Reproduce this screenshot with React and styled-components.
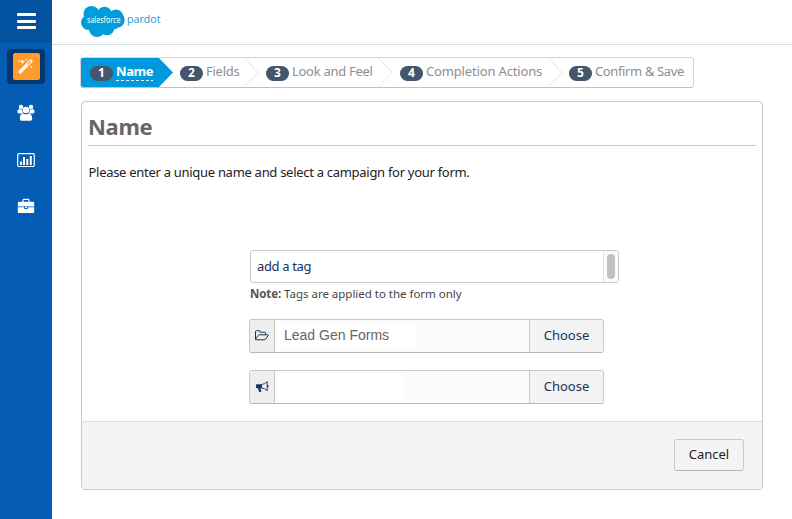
import React from "react";
import styled, { createGlobalStyle, css } from "styled-components";

const GlobalStyle = createGlobalStyle`
  * { box-sizing: border-box; }
  body { margin: 0; background: #fff; font-family: "Noto Sans", sans-serif; font-size: 13px; color: #222; overflow: hidden; }
  button, input { font: inherit; }
  svg { display: block; }
`;

const Page = styled.div`
  display: grid;
  grid-template-columns: 52px 1fr;
  height: 519px;
`;

const Sidebar = styled.nav`
  background: #045cb4;
  display: flex;
  flex-direction: column;
  align-items: center;
`;

const MenuToggle = styled.button`
  width: 52px;
  height: 43px;
  border: 0;
  padding: 13px 0 0 17px;
  background: #0353a0;
  display: flex;
  flex-direction: column;
  justify-content: flex-start;
  gap: 3.5px;
`;

const MenuBar = styled.span`
  width: 19px;
  height: 3px;
  border-radius: 1px;
  background: #fff;
`;

const ActiveNav = styled.div`
  width: 38px;
  height: 35px;
  margin-top: 6px;
  border-radius: 4px;
  background: #03366b;
  display: flex;
  align-items: center;
  justify-content: center;
`;

const NavTile = styled.div`
  width: 27px;
  height: 27px;
  border-radius: 2px;
  background: #ff9a2c;
  display: flex;
  align-items: center;
  justify-content: center;
`;

const NavItem = styled.div`
  height: 18px;
  margin-top: ${(p) => p.$gap}px;
`;

const Main = styled.div`
  min-width: 0;
`;

const Header = styled.header`
  height: 45px;
  border-bottom: 1px solid #d8dde6;
  padding: 5px 0 0 28px;
`;

const Content = styled.main`
  padding: 12px 29px 0 28px;
`;

const Steps = styled.ol`
  display: flex;
  list-style: none;
  margin: 0;
  padding: 0;
  width: 614px;
  height: 31px;
  border: 1px solid #d4d4d4;
  border-bottom-color: #c2c2c2;
  border-radius: 3px;
  overflow: hidden;
`;

const Step = styled.li`
  display: flex;
  width: ${(p) => p.$width}px;
  height: 29px;
  padding-left: ${(p) => p.$indent}px;
  color: #8e8e8e;
  white-space: nowrap;
  position: relative;
  ${(p) =>
    p.$active &&
    css`
      color: #fff;
      font-weight: 700;
      background: #0099dd;
      clip-path: polygon(0 0, calc(100% - 14px) 0, 100% 50%, calc(100% - 14px) 100%, 0 100%);
    `}
`;

const StepNumber = styled.span`
  width: 23px;
  height: 15px;
  margin-top: 8px;
  border-radius: 8px;
  background: #44566c;
  color: #fff;
  font-size: 12px;
  font-weight: 700;
  line-height: 14px;
  text-align: center;
`;

const StepLabel = styled.span`
  height: 23px;
  margin-left: 3px;
  line-height: 26px;
  letter-spacing: ${(p) => p.$tracking}px;
  ${(p) => p.$active && css`
    background: repeating-linear-gradient(90deg, #fff 0 3px, transparent 3px 5px) bottom / 100% 1px no-repeat;
  `}
`;

const StepArrow = styled.svg`
  position: absolute;
  right: 0;
  top: 0;
`;

const Panel = styled.section`
  margin-top: 13px;
  margin-left: 1px;
  width: 682px;
  height: 389px;
  border: 1px solid #c9c9c9;
  border-radius: 4px;
  display: flex;
  flex-direction: column;
  overflow: hidden;
`;

const PanelBody = styled.div`
  flex: 1;
  padding: 0 6px;
`;

const Title = styled.h1`
  margin: 0;
  height: 44px;
  border-bottom: 1px solid #c9c9c9;
  color: #666;
  font-size: 22px;
  font-weight: 700;
  line-height: 48px;
  letter-spacing: -0.3px;
`;

const Intro = styled.p`
  margin: 16px 0 0;
  padding-left: 0.5px;
  line-height: 20px;
  letter-spacing: -0.29px;
`;

const Fields = styled.div`
  padding-left: 161px;
  margin-top: 68px;
`;

const TagBox = styled.div`
  display: flex;
  width: 369px;
  height: 33px;
  border: 1px solid #c9c9c9;
  border-radius: 3px;
  margin-left: 1px;
  padding-left: 6px;
  line-height: 31px;
  letter-spacing: -0.35px;
  color: #16325c;
  overflow: hidden;
`;

const ScrollTrack = styled.div`
  margin-left: auto;
  width: 15px;
  border-left: 1px solid #e5e5e5;
  background: #fafafa;
  padding: 3px 0 0 3px;
`;

const ScrollThumb = styled.div`
  width: 8px;
  height: 25px;
  border-radius: 4px;
  background: #c1c1c1;
`;

const Note = styled.p`
  margin: 3px 0 0 1px;
  height: 16px;
  line-height: 16px;
  font-size: 11.5px;
  letter-spacing: -0.02px;
  color: #444;
`;

const NoteLead = styled.b`
  color: #555;
  letter-spacing: -0.1px;
`;

const Picker = styled.div`
  display: flex;
  width: 355px;
  height: 34px;
  margin-top: 17px;
  border: 1px solid #c9c9c9;
  border-bottom-color: #b8b8b8;
  border-radius: 3px;
  overflow: hidden;
`;

const PickerIcon = styled.div`
  width: 24px;
  background: #eee;
  color: #16325c;
  padding: 8px 0 0 4px;
`;

const PickerValue = styled.div`
  width: 256px;
  border: solid #c9c9c9;
  border-width: 0 1px;
  padding-left: 9px;
  background: linear-gradient(#fff, #fff) 2px 3px / ${(p) => p.$fill}px 25px no-repeat #fbfbfb;
  color: #666;
  font-family: "Liberation Sans", Arial, sans-serif;
  font-size: 14px;
  line-height: 31px;
`;

const PickerButton = styled.button`
  flex: 1;
  border: 0;
  padding: 0 0 2px;
  background: #f4f4f4;
  color: #16325c;
  line-height: 30px;
`;

const PanelFooter = styled.footer`
  height: 68px;
  border-top: 1px solid #dedede;
  background: #f4f4f4;
  display: flex;
  justify-content: flex-end;
  padding: 17px 18px 0;
`;

const CancelButton = styled.button`
  width: 70px;
  height: 32px;
  border: 1px solid #c9c9c9;
  border-bottom-color: #b5b5b5;
  border-radius: 3px;
  background: #f4f4f4;
  color: #222;
  padding: 0 0 2px;
  line-height: 28px;
`;

const LogoWord = styled.text`
  font-family: ${(p) => (p.$brand ? '"Open Sans"' : '"Noto Sans"')}, sans-serif;
  font-size: ${(p) => (p.$brand ? 11.5 : 8.5)}px;
  fill: ${(p) => (p.$brand ? "#159bd7" : "#fff")};
`;

const Logo = () => (
  <svg width="84" height="34" viewBox="80 5 84 34">
    <g fill="#009ddc">
      <circle cx="91.5" cy="14" r="8" />
      <circle cx="104.5" cy="14" r="7.3" />
      <circle cx="116" cy="16.5" r="7" />
      <circle cx="117" cy="20" r="7.7" />
      <circle cx="88.5" cy="22.5" r="7.5" />
      <circle cx="97" cy="29" r="8" />
      <circle cx="107" cy="27.5" r="7.7" />
      <rect x="88" y="13" width="29" height="16" />
    </g>
    <LogoWord x="87" y="23" textLength="33.5" lengthAdjust="spacingAndGlyphs">salesforce</LogoWord>
    <LogoWord $brand x="127" y="23" textLength="33.5" lengthAdjust="spacingAndGlyphs">pardot</LogoWord>
  </svg>
);

const WandIcon = () => (
  <svg width="18" height="18" viewBox="0 0 18 18">
    <path d="M3.2 13.8 13.9 3.3" stroke="#fff" strokeWidth="3.4" strokeLinecap="round" />
    <path d="M10.6 6.6 13.9 3.3" stroke="#ff9a2c" strokeWidth="1.3" />
    <path d="M5.5 1.3l.7 1.8 1.8.7-1.8.7-.7 1.8-.7-1.8L3 3.8l1.8-.7zM9.5.5l.4 1 1 .4-1 .4-.4 1-.4-1-1-.4 1-.4zM2.3 1.5l.4.9.9.4-.9.4-.4.9-.4-.9-.9-.4.9-.4zM14.5 7.6l.4 1 1 .4-1 .4-.4 1-.4-1-1-.4 1-.4z" fill="#fff" />
  </svg>
);

const PeopleIcon = () => (
  <svg width="18" height="18" viewBox="0 0 18 18" fill="#fff">
    <circle cx="4" cy="2.9" r="2.2" />
    <circle cx="14" cy="2.9" r="2.2" />
    <path d="M.4 8c0-2 .9-3.1 2-3.1 1 .8 2.2.8 3 .4-.4 2 .1 3.3 1 4.1H2C.9 9.4.4 8.9.4 8zM17.6 8c0-2-.9-3.1-2-3.1-1 .8-2.2.8-3 .4.4 2-.1 3.3-1 4.1H16c1.1 0 1.6-.5 1.6-1.4z" />
    <circle cx="9" cy="6" r="3.3" />
    <path d="M2.8 14.4c0-3 1.2-5 3.5-5 1.6 1.2 3.8 1.2 5.4 0 2.3 0 3.5 2 3.5 5 0 1.6-.8 2.4-2.2 2.4H5c-1.4 0-2.2-.8-2.2-2.4z" />
  </svg>
);

const ChartIcon = () => (
  <svg width="18" height="18" viewBox="0 0 18 18">
    <rect x=".7" y="2.7" width="16.6" height="12.8" rx="1.2" fill="none" stroke="#fff" strokeWidth="1.2" />
    <path d="M3 10.5h2V14H3zM6 6h2v8H6zM9.3 8h2v6h-2zM12.8 5h2v9h-2z" fill="#fff" />
  </svg>
);

const BriefcaseIcon = () => (
  <svg width="18" height="18" viewBox="0 0 18 18" fill="#fff">
    <path d="M6 5.5V3.2q0-.8.8-.8h4.4q.8 0 .8.8v2.3" fill="none" stroke="#fff" strokeWidth="1.1" />
    <path d="M2 4.8h14q1.2 0 1.2 1.2v3.6H11v-.4H7v.4H.8V6Q.8 4.8 2 4.8zM.8 10.3H7v.8q0 .8.8.8h2.4q.8 0 .8-.8v-.8h6.2v4.6q0 1.2-1.2 1.2H2q-1.2 0-1.2-1.2zM8 9.7h2v1.2H8z" />
  </svg>
);

const FolderIcon = () => (
  <svg width="16" height="16" viewBox="0 0 16 16" fill="none" stroke="currentColor" strokeWidth="1" strokeLinejoin="round">
    <path d="M1.5 11.3V3.6q0-.9.9-.9h2.7q.9 0 .9.9v.6h4.6q.9 0 .9.9v1.7M1.5 11.3l2.6-3.8q.5-.7 1.3-.7h8.3q1 0 .4.8l-2.3 3.3q-.7.9-1.6.9H2.4q-.9 0-.9-.5z" />
  </svg>
);

const MegaphoneIcon = () => (
  <svg width="16" height="16" viewBox="0 0 16 16">
    <path d="M3 5.2h5v4H6.4l.5 1.3-.2.6.9 1.2q-1.1 1-2.5.4-.7-1.8-1-3.5H3Q2 9.2 2 8.2v-2q0-1 1-1z" fill="currentColor" />
    <path d="M7.5 5.5Q11 5.2 13.2 2.7v9Q11 9.4 7.5 8.9" fill="none" stroke="currentColor" strokeWidth=".9" />
    <path d="M13.8 6.2v2" stroke="currentColor" strokeWidth="1.4" />
  </svg>
);

const steps = [
  { label: "Name", width: 92, indent: 9, tracking: -0.4, active: true },
  { label: "Fields", width: 86, indent: 7, tracking: -0.25 },
  { label: "Look and Feel", width: 134, indent: 7, tracking: -0.28 },
  { label: "Completion Actions", width: 170, indent: 7, tracking: -0.16 },
  { label: "Confirm & Save", width: 130, indent: 6, tracking: -0.37 },
];

export default function App() {
  return (
    <>
      <GlobalStyle />
      <Page>
        <Sidebar>
          <MenuToggle aria-label="Menu"><MenuBar /><MenuBar /><MenuBar /></MenuToggle>
          <ActiveNav><NavTile><WandIcon /></NavTile></ActiveNav>
          <NavItem $gap={20}><PeopleIcon /></NavItem>
          <NavItem $gap={29}><ChartIcon /></NavItem>
          <NavItem $gap={28}><BriefcaseIcon /></NavItem>
        </Sidebar>
        <Main>
          <Header><Logo /></Header>
          <Content>
            <Steps>
              {steps.map((s, i) => (
                <Step key={s.label} $width={s.width} $indent={s.indent} $active={s.active}>
                  <StepNumber>{i + 1}</StepNumber>
                  <StepLabel $active={s.active} $tracking={s.tracking}>{s.label}</StepLabel>
                  {i > 0 && i < steps.length - 1 && (
                    <StepArrow width="15" height="29" fill="none" stroke="#e3e3e3">
                      <path d="M.5 0 14 14.5.5 29" />
                    </StepArrow>
                  )}
                </Step>
              ))}
            </Steps>
            <Panel>
              <PanelBody>
                <Title>Name</Title>
                <Intro>Please enter a unique name and select a campaign for your form.</Intro>
                <Fields>
                  <TagBox>
                    add a tag
                    <ScrollTrack><ScrollThumb /></ScrollTrack>
                  </TagBox>
                  <Note><NoteLead>Note:</NoteLead> Tags are applied to the form only</Note>
                  <Picker>
                    <PickerIcon><FolderIcon /></PickerIcon>
                    <PickerValue $fill={140}>Lead Gen Forms</PickerValue>
                    <PickerButton>Choose</PickerButton>
                  </Picker>
                  <Picker>
                    <PickerIcon><MegaphoneIcon /></PickerIcon>
                    <PickerValue $fill={128} />
                    <PickerButton>Choose</PickerButton>
                  </Picker>
                </Fields>
              </PanelBody>
              <PanelFooter><CancelButton>Cancel</CancelButton></PanelFooter>
            </Panel>
          </Content>
        </Main>
      </Page>
    </>
  );
}
